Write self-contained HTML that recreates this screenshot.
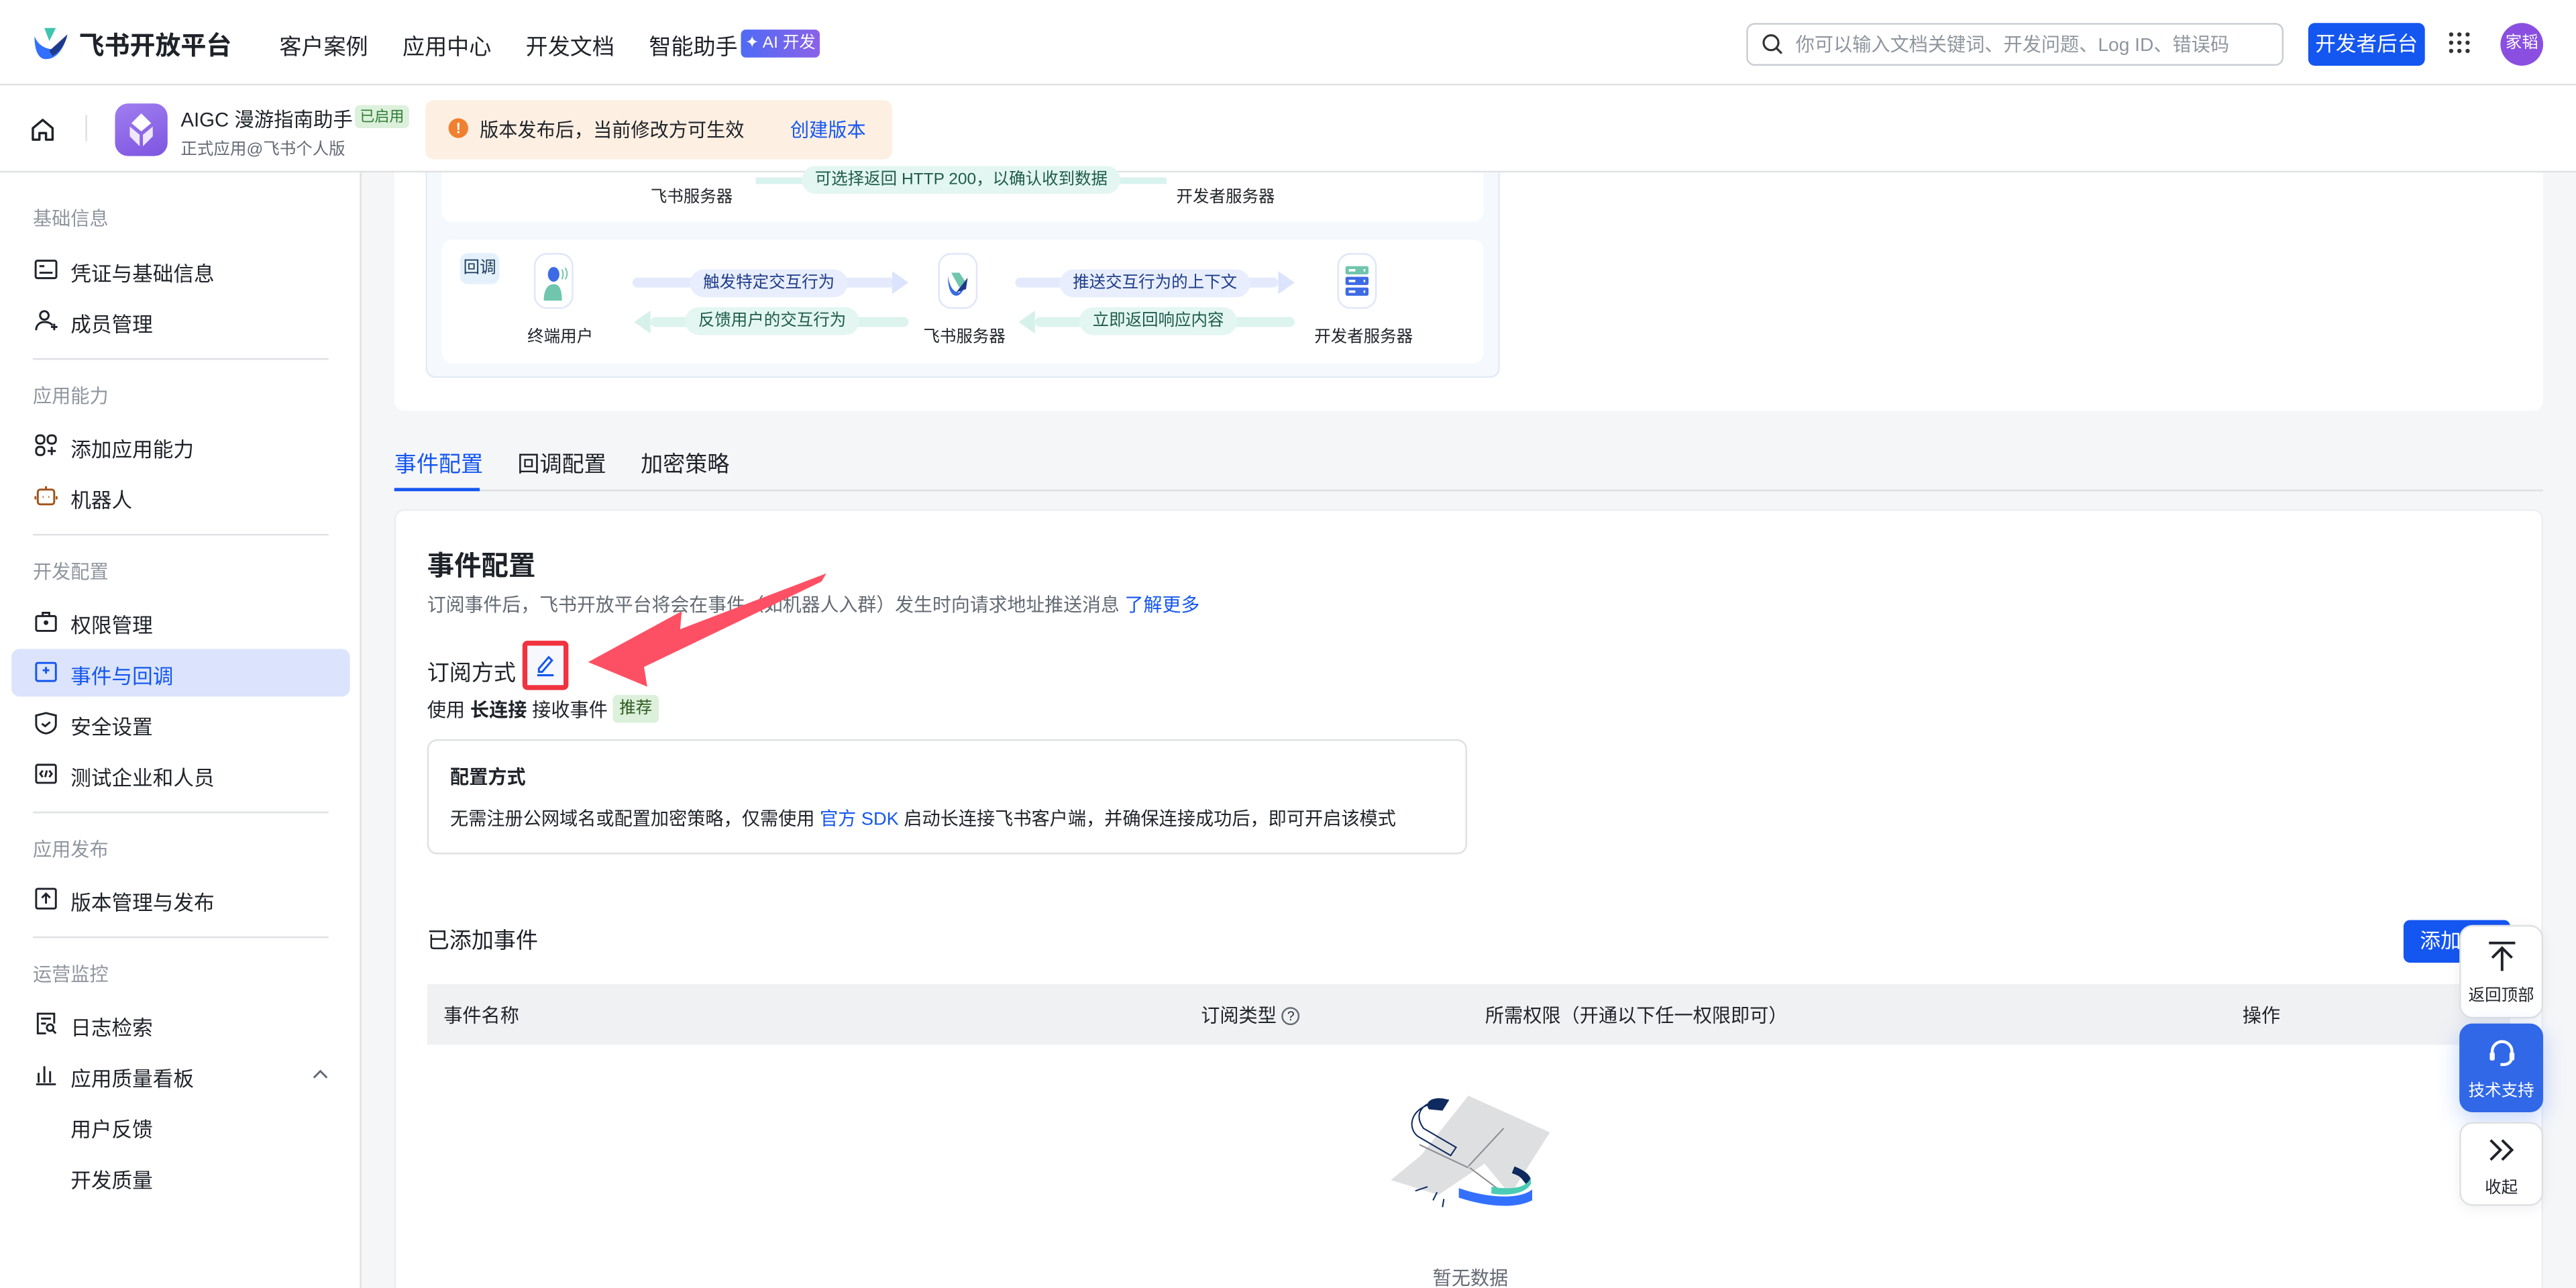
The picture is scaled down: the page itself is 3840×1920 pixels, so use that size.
<!DOCTYPE html>
<html><head><meta charset="utf-8">
<style>
*{box-sizing:border-box;margin:0;padding:0}
html,body{width:3840px;height:1918px;overflow:hidden;background:#f5f6f8}
#w{position:absolute;left:0;top:0;width:1568px;height:784px;transform:scale(2.449);transform-origin:0 0;font-family:"Liberation Sans","Noto Sans CJK SC",sans-serif;color:#1f2329;font-size:13px;background:#f5f6f8;overflow:hidden}
.a{position:absolute}
.t{position:absolute;white-space:nowrap}
.nav{left:0;top:0;width:1568px;height:52px;background:#fff;border-bottom:1px solid #dee0e3}
.bar{left:0;top:52px;width:1568px;height:53px;background:#fff;border-bottom:1px solid #dee0e3}
.side{left:0;top:105px;width:220px;height:690px;background:#fff;border-right:1px solid #dee0e3}
.sec{font-size:11.5px;color:#8f959e;left:20px}
.it{font-size:12.5px;left:43px;color:#1f2329}
.ic{position:absolute;left:21px;width:14px;height:14px}
.hr{position:absolute;left:20px;width:180px;height:1px;background:#dee0e3}
.card{background:#fff;border-radius:6px}
.pill{position:absolute;font-size:10px;padding:0 8px;height:17px;line-height:17px;border-radius:9px;white-space:nowrap}
.ibox{position:absolute;width:34px;height:34px;background:#fff;border:1px solid #dfe6fb;border-radius:8px}
.fb{position:absolute;left:1497px;width:51px;background:#fff;border:1px solid #dee0e3;border-radius:8px;font-size:10px;text-align:center;box-shadow:0 2px 8px rgba(0,0,0,.06)}
</style></head><body><div id="w">
<div class="a nav">
 <svg class="a" style="left:20px;top:17px" width="24" height="20" viewBox="0 0 24 20"><path d="M7 0h7l-4 8z" fill="#3ec5ae"/><path d="M1 5c2 5 6 8 12 8l8-9c-2 8-6 15-13 15C4 19 1 15 1 5z" fill="#3370ff"/><path d="M10 14l11-10c-1 6-5 11-9 13z" fill="#1e3a8a"/></svg>
 <div class="t" style="left:48px;top:16px;font-size:15.5px;font-weight:bold">飞书开放平台</div>
 <div class="t" style="left:170px;top:17px;font-size:13.5px">客户案例</div>
 <div class="t" style="left:245px;top:17px;font-size:13.5px">应用中心</div>
 <div class="t" style="left:320px;top:17px;font-size:13.5px">开发文档</div>
 <div class="t" style="left:395px;top:17px;font-size:13.5px">智能助手</div>
 <div class="t" style="left:451px;top:18px;height:17px;width:48px;border-radius:3px;background:linear-gradient(90deg,#4e6bf5,#8b62e8);color:#fff;font-size:10px;line-height:17px;text-align:center">✦ AI 开发</div>
 <div class="a" style="left:1063px;top:14px;width:327px;height:26px;border:1px solid #c9cdd4;border-radius:5px"></div>
 <svg class="a" style="left:1072px;top:20px" width="14" height="14" viewBox="0 0 14 14"><circle cx="6" cy="6" r="4.5" fill="none" stroke="#333" stroke-width="1.3"/><path d="M9.5 9.5l3 3" stroke="#333" stroke-width="1.3"/></svg>
 <div class="t" style="left:1093px;top:19px;font-size:11.5px;color:#8f959e">你可以输入文档关键词、开发问题、Log ID、错误码</div>
 <div class="t" style="left:1405px;top:14px;width:71px;height:26px;background:#1456f0;border-radius:4px;color:#fff;font-size:12.5px;line-height:26px;text-align:center">开发者后台</div>
 <svg class="a" style="left:1490px;top:19px" width="14" height="14" viewBox="0 0 14 14" fill="#333"><circle cx="2" cy="2" r="1.3"/><circle cx="7" cy="2" r="1.3"/><circle cx="12" cy="2" r="1.3"/><circle cx="2" cy="7" r="1.3"/><circle cx="7" cy="7" r="1.3"/><circle cx="12" cy="7" r="1.3"/><circle cx="2" cy="12" r="1.3"/><circle cx="7" cy="12" r="1.3"/><circle cx="12" cy="12" r="1.3"/></svg>
 <div class="t" style="left:1522px;top:14px;width:26px;height:26px;border-radius:13px;background:#8a4fe0;color:#fff;font-size:10px;line-height:26px;text-align:center">家韬</div>
</div>
<div class="a bar">
 <svg class="a" style="left:18px;top:19px" width="16" height="16" viewBox="0 0 16 16"><path d="M2 7l6-5 6 5v7H10v-4H6v4H2z" fill="none" stroke="#1f2329" stroke-width="1.4" stroke-linejoin="round"/></svg>
 <div class="a" style="left:52px;top:18px;width:1px;height:16px;background:#dee0e3"></div>
 <div class="a" style="left:70px;top:11px;width:32px;height:32px;border-radius:8px;background:linear-gradient(160deg,#a07ef0,#7d55e0)"></div>
 <svg class="a" style="left:78px;top:16px" width="16" height="22" viewBox="0 0 16 22"><path d="M8 1l6 6-6 5-6-5z" fill="#fff"/><path d="M1 9l6 5v7l-6-6z" fill="#eee7ff"/><path d="M15 9l-6 5v7l6-6z" fill="#eee7ff"/></svg>
 <div class="t" style="left:110px;top:12px;font-size:12px">AIGC 漫游指南助手</div>
 <div class="t" style="left:216px;top:12px;height:14px;padding:0 3px;background:#dcf0dc;color:#2e7d32;font-size:9px;line-height:14px;border-radius:3px">已启用</div>
 <div class="t" style="left:110px;top:30px;font-size:10px;color:#646a73">正式应用@飞书个人版</div>
 <div class="a" style="left:259px;top:9px;width:284px;height:36px;background:#fdefe2;border-radius:5px"></div>
 <div class="a" style="left:273px;top:20px;width:12px;height:12px;border-radius:6px;background:#f08030;color:#fff;font-size:9px;line-height:12px;text-align:center;font-weight:bold">!</div>
 <div class="t" style="left:292px;top:19px;font-size:11.5px">版本发布后，当前修改方可生效</div>
 <div class="t" style="left:481px;top:19px;font-size:11.5px;color:#1456f0">创建版本</div>
</div>
<div class="a side">
 <div class="t sec" style="top:20px">基础信息</div>
 <svg class="ic" style="top:52px" viewBox="0 0 14 14"><rect x="0.7" y="1.7" width="12.6" height="10.6" rx="1" fill="none" stroke="#1f2329" stroke-width="1.2"/><path d="M3 5h3M3 9h8" stroke="#1f2329" stroke-width="1.2"/></svg>
 <div class="t it" style="top:51px">凭证与基础信息</div>
 <svg class="ic" style="top:83px" viewBox="0 0 14 14"><circle cx="6" cy="4" r="2.6" fill="none" stroke="#1f2329" stroke-width="1.2"/><path d="M1 13c0-3 2-5 5-5s4 1 5 2M10 11h4M12 9v4" fill="none" stroke="#1f2329" stroke-width="1.2"/></svg>
 <div class="t it" style="top:82px">成员管理</div>
 <div class="hr" style="top:113px"></div>
 <div class="t sec" style="top:128px">应用能力</div>
 <svg class="ic" style="top:159px" viewBox="0 0 14 14" fill="none" stroke="#1f2329" stroke-width="1.2"><rect x="1" y="1" width="5" height="5" rx="2"/><rect x="8" y="1" width="5" height="5" rx="2"/><rect x="1" y="8" width="5" height="5" rx="2"/><path d="M8 10.5h5M10.5 8v5"/></svg>
 <div class="t it" style="top:158px">添加应用能力</div>
 <svg class="ic" style="top:190px" viewBox="0 0 14 14" fill="none" stroke="#a0521a" stroke-width="1.2"><rect x="2" y="3" width="10" height="9" rx="1.5"/><path d="M7 1v2M0.5 7v2M13.5 7v2M5 7.5h.5M8.5 7.5h.5"/></svg>
 <div class="t it" style="top:189px">机器人</div>
 <div class="hr" style="top:220px"></div>
 <div class="t sec" style="top:235px">开发配置</div>
 <svg class="ic" style="top:266px" viewBox="0 0 14 14" fill="none" stroke="#1f2329" stroke-width="1.2"><rect x="1" y="4" width="12" height="9" rx="1"/><path d="M5 4V2h4v2"/><circle cx="7" cy="8" r=".8" fill="#1f2329"/></svg>
 <div class="t it" style="top:265px">权限管理</div>
 <div class="a" style="left:7px;top:290px;width:206px;height:29px;background:#dbe4fc;border-radius:5px"></div>
 <svg class="ic" style="top:297px" viewBox="0 0 14 14" fill="none" stroke="#1456f0" stroke-width="1.2"><rect x="1" y="1.5" width="12" height="11" rx="1"/><path d="M5 6h4M7 4v4"/></svg>
 <div class="t it" style="top:296px;color:#1456f0">事件与回调</div>
 <svg class="ic" style="top:328px" viewBox="0 0 14 14" fill="none" stroke="#1f2329" stroke-width="1.2"><path d="M1 2.5L7 1l6 1.5V8c0 3-3 5-6 5.5C4 13 1 11 1 8z"/><path d="M4.5 7.5l2 1.5 3-2.5"/></svg>
 <div class="t it" style="top:327px">安全设置</div>
 <svg class="ic" style="top:359px" viewBox="0 0 14 14" fill="none" stroke="#1f2329" stroke-width="1.2"><rect x="1" y="1.5" width="12" height="11" rx="1"/><path d="M5 5L3.5 7 5 9M9 5l1.5 2L9 9M7.5 5l-1 4"/></svg>
 <div class="t it" style="top:358px">测试企业和人员</div>
 <div class="hr" style="top:389px"></div>
 <div class="t sec" style="top:404px">应用发布</div>
 <svg class="ic" style="top:435px" viewBox="0 0 14 14" fill="none" stroke="#1f2329" stroke-width="1.2"><rect x="1" y="1" width="12" height="12" rx="1"/><path d="M7 10V4M4.5 6.5L7 4l2.5 2.5"/></svg>
 <div class="t it" style="top:434px">版本管理与发布</div>
 <div class="hr" style="top:465px"></div>
 <div class="t sec" style="top:480px">运营监控</div>
 <svg class="ic" style="top:511px" viewBox="0 0 14 14" fill="none" stroke="#1f2329" stroke-width="1.2"><path d="M12 7V1H2v12h5"/><circle cx="9.5" cy="9.5" r="2"/><path d="M11 11l2 2M4 4h6M4 7h3"/></svg>
 <div class="t it" style="top:510px">日志检索</div>
 <svg class="ic" style="top:542px" viewBox="0 0 14 14" fill="none" stroke="#1f2329" stroke-width="1.2"><path d="M1 13h12M2.5 12V6M6 12V2M9.5 12V5"/></svg>
 <div class="t it" style="top:541px">应用质量看板</div>
 <svg class="a" style="left:190px;top:545px" width="10" height="8" viewBox="0 0 10 8"><path d="M1 6l4-4 4 4" fill="none" stroke="#646a73" stroke-width="1.2"/></svg>
 <div class="t it" style="top:572px">用户反馈</div>
 <div class="t it" style="top:603px">开发质量</div>
</div>
<div class="a card" style="left:240px;top:105px;width:1308px;height:145px;border-radius:0 0 6px 6px"></div>
<div class="a" style="left:259px;top:105px;width:654px;height:125px;background:#f5f9fe;border:1px solid #e3eaf5;border-top:none;border-radius:0 0 6px 6px"></div>
<div class="a" style="left:269px;top:105px;width:634px;height:30px;background:#fff;border-radius:0 0 6px 6px"></div>
<div class="a" style="left:460px;top:108px;width:250px;height:4px;background:#d8f2ee"></div>
<div class="pill" style="left:488px;top:101px;background:#e4f6f2;color:#1d5c4a">可选择返回 HTTP 200，以确认收到数据</div>
<div class="t" style="left:396px;top:111px;font-size:10px">飞书服务器</div>
<div class="t" style="left:716px;top:111px;font-size:10px">开发者服务器</div>
<div class="a" style="left:269px;top:146px;width:634px;height:75px;background:#fff;border-radius:6px"></div>
<div class="t" style="left:280px;top:154px;width:24px;height:19px;background:#e4f1fc;border-radius:5px;font-size:10px;line-height:19px;text-align:center;color:#1d3b5c">回调</div>
<div class="ibox" style="left:325px;top:154px;width:24px;height:34px"></div>
<svg class="a" style="left:330px;top:160px" width="16" height="24" viewBox="0 0 16 24"><ellipse cx="7" cy="7" rx="3.5" ry="4.5" fill="#3d6be5"/><path d="M1 23c0-6 2-10 6-10s5 4 5 10z" fill="#6fc6ad"/><path d="M12 4c1 2 1 4 0 6M14 3c1.5 2.5 1.5 5 0 7" stroke="#6fc6ad" fill="none" stroke-width=".8"/></svg>
<div class="a" style="left:385px;top:169px;width:160px;height:6px;background:#e4eafc;border-radius:3px"></div>
<svg class="a" style="left:543px;top:165px" width="10" height="14"><path d="M0 0l10 7-10 7z" fill="#dbe4fc"/></svg>
<div class="pill" style="left:420px;top:164px;background:#e8eefd;color:#1f3c88">触发特定交互行为</div>
<div class="a" style="left:396px;top:193px;width:157px;height:6px;background:#dcf3ee;border-radius:3px"></div>
<svg class="a" style="left:386px;top:189px" width="10" height="14"><path d="M10 0L0 7l10 7z" fill="#d6f0ea"/></svg>
<div class="pill" style="left:417px;top:187px;background:#e4f6f2;color:#1d5c4a">反馈用户的交互行为</div>
<div class="ibox" style="left:571px;top:154px;width:24px;height:34px"></div>
<svg class="a" style="left:576px;top:160px" width="15" height="22" viewBox="0 0 15 22"><path d="M1 8c1 6 3 10 7 10l5-8c-2 6-4 10-7 10C3 20 1 16 1 8z" fill="#3d6be5"/><path d="M3 6h5l4 6-4 3z" fill="#6fc6ad"/><path d="M6 18l7-9-1 7z" fill="#1e3a8a"/></svg>
<div class="a" style="left:618px;top:169px;width:160px;height:6px;background:#e4eafc;border-radius:3px"></div>
<svg class="a" style="left:778px;top:165px" width="10" height="14"><path d="M0 0l10 7-10 7z" fill="#dbe4fc"/></svg>
<div class="pill" style="left:645px;top:164px;background:#e8eefd;color:#1f3c88">推送交互行为的上下文</div>
<div class="a" style="left:630px;top:193px;width:158px;height:6px;background:#dcf3ee;border-radius:3px"></div>
<svg class="a" style="left:620px;top:189px" width="10" height="14"><path d="M10 0L0 7l10 7z" fill="#d6f0ea"/></svg>
<div class="pill" style="left:657px;top:187px;background:#e4f6f2;color:#1d5c4a">立即返回响应内容</div>
<div class="ibox" style="left:814px;top:154px;width:24px;height:34px"></div>
<svg class="a" style="left:818px;top:161px" width="16" height="20" viewBox="0 0 16 20"><rect x="1" y="1" width="14" height="5" rx="1" fill="#6fc6ad"/><rect x="1" y="7.5" width="14" height="5" rx="1" fill="#3d6be5"/><rect x="1" y="14" width="14" height="5" rx="1" fill="#3d6be5"/><path d="M3 3.5h4M3 10h4M3 16.5h4M12 3.5h1M12 10h1M12 16.5h1" stroke="#fff" stroke-width="1.5"/></svg>
<div class="t" style="left:321px;top:196px;font-size:10px">终端用户</div>
<div class="t" style="left:562px;top:196px;font-size:10px">飞书服务器</div>
<div class="t" style="left:800px;top:196px;font-size:10px">开发者服务器</div>
<div class="t" style="left:240px;top:271px;font-size:13.5px;color:#1456f0">事件配置</div>
<div class="t" style="left:315px;top:271px;font-size:13.5px">回调配置</div>
<div class="t" style="left:390px;top:271px;font-size:13.5px">加密策略</div>
<div class="a" style="left:240px;top:298px;width:1308px;height:1px;background:#dee0e3"></div>
<div class="a" style="left:240px;top:297px;width:52px;height:2px;background:#1456f0"></div>
<div class="a card" style="left:240px;top:310px;width:1308px;height:490px;border:1px solid #eceef1"></div>
<div class="t" style="left:260px;top:331px;font-size:16.5px;font-weight:bold">事件配置</div>
<div class="t" style="left:260px;top:360px;font-size:11.4px;color:#646a73">订阅事件后，飞书开放平台将会在事件（如机器人入群）发生时向请求地址推送消息 <span style="color:#1456f0">了解更多</span></div>
<div class="t" style="left:260px;top:398px;font-size:13.5px">订阅方式</div>
<div class="a" style="left:318px;top:390px;width:28px;height:30px;border:3px solid #f0333f;border-radius:3px;background:#f6f8fe"></div>
<svg class="a" style="left:325px;top:398px" width="14" height="14" viewBox="0 0 14 14"><path d="M3 9l6-7 2 2-6 7H3z" fill="none" stroke="#1456f0" stroke-width="1.2"/><path d="M2 13h10" stroke="#1456f0" stroke-width="1.3"/></svg>
<div class="t" style="left:260px;top:424px;font-size:11.5px">使用 <b>长连接</b> 接收事件</div>
<div class="t" style="left:373px;top:423px;height:17px;padding:0 4px;background:#dcf0dc;color:#2e5a1f;font-size:10px;line-height:17px;border-radius:3px">推荐</div>
<div class="a" style="left:260px;top:450px;width:633px;height:70px;border:1px solid #dee0e3;border-radius:6px"></div>
<div class="t" style="left:274px;top:465px;font-size:11.5px;font-weight:bold">配置方式</div>
<div class="t" style="left:274px;top:490px;font-size:11.1px">无需注册公网域名或配置加密策略，仅需使用 <span style="color:#1456f0">官方 SDK</span> 启动长连接飞书客户端，并确保连接成功后，即可开启该模式</div>
<div class="t" style="left:260px;top:561px;font-size:13.5px">已添加事件</div>
<div class="t" style="left:1463px;top:560px;width:65px;height:26px;background:#1456f0;border-radius:4px;color:#fff;font-size:12.5px;line-height:26px;padding-left:10px">添加事件</div>
<div class="a" style="left:260px;top:599px;width:1268px;height:37px;background:#f0f1f3"></div>
<div class="t" style="left:270px;top:610px;font-size:11.5px;color:#1f2329">事件名称</div>
<div class="t" style="left:731px;top:610px;font-size:11.5px">订阅类型 <span style="display:inline-block;width:11px;height:11px;border:1px solid #646a73;border-radius:6px;font-size:8px;line-height:9px;text-align:center;vertical-align:1px">?</span></div>
<div class="t" style="left:904px;top:610px;font-size:11.5px">所需权限（开通以下任一权限即可）</div>
<div class="t" style="left:1365px;top:610px;font-size:11.5px">操作</div>
<svg class="a" style="left:840px;top:655px" width="110" height="100" viewBox="0 0 133 112"><path d="M65 10l60 27-28 44-2 1-18-22-34 23L8 72l22-18z" fill="#dedfe1"/><path d="M29 46l36 17M65 62l26-28M66 63l20 15" stroke="#8a8d92" stroke-width="1"/><path d="M42 14c-12 2-17 10-10 20l24 14-4 6-24-14c-8-6-6-20 10-24z" fill="none" stroke="#0e2a5e" stroke-width="1"/><path d="M36 20c-3-4 0-9 10-8l5 1-5 8z" fill="#0e2a5e"/><path d="M99 62c10 4 15 9 10 15l-4-5c-2-3-5-4-8-5z" fill="#0e2a5e"/><path d="M82 77c12 2 26 2 29-7v5c-4 7-16 9-29 7z" fill="#49ccb3"/><path d="M58 85c18 6 40 9 54 2v-8c-10 8-34 6-54-1zM78 89v-6" fill="#3370ff"/><path d="M26 80l9-3M39 87l3-6M46 92l1-6" stroke="#0e2a5e" stroke-width="1"/></svg>
<div class="t" style="left:872px;top:770px;font-size:11.5px;color:#646a73">暂无数据</div>
<svg class="a" style="left:340px;top:345px" width="170" height="75" viewBox="0 0 170 75"><path d="M163 4L74 38 75 27 18 58 54 73 52 61 160 9z" fill="#fe5064"/></svg>
<div class="fb" style="top:563px;height:57px"><svg style="margin-top:8px" width="18" height="20" viewBox="0 0 18 20"><path d="M1 2h16M9 19V5M3 11l6-6 6 6" fill="none" stroke="#1f2329" stroke-width="1.6"/></svg><div style="margin-top:2px">返回顶部</div></div>
<div class="fb" style="top:623px;height:54px;background:#3068e8;border-color:#3068e8;color:#fff;box-shadow:0 4px 14px rgba(51,112,255,.3)"><svg style="margin-top:8px" width="18" height="18" viewBox="0 0 18 18"><path d="M3 10V8a6 6 0 0112 0v3c0 3-2 5-5 5H8" fill="none" stroke="#fff" stroke-width="1.8"/><rect x="1.5" y="8.5" width="3" height="5" rx="1" fill="#fff"/><rect x="13.5" y="8.5" width="3" height="5" rx="1" fill="#fff"/></svg><div style="margin-top:2px">技术支持</div></div>
<div class="fb" style="top:683px;height:51px"><svg style="margin-top:8px" width="18" height="16" viewBox="0 0 18 16"><path d="M2 2l6 6-6 6M9 2l6 6-6 6" fill="none" stroke="#1f2329" stroke-width="1.6"/></svg><div style="margin-top:3px">收起</div></div>
</div></body></html>
